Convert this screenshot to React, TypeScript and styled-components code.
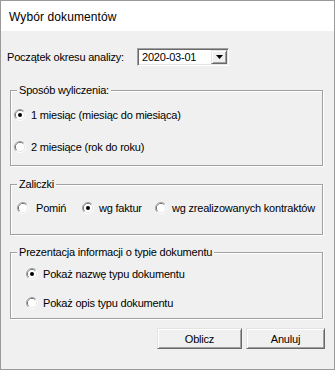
import React, { useState } from 'react'
import styled, { createGlobalStyle } from 'styled-components'

const Global = createGlobalStyle`
  html, body {
    margin: 0;
    padding: 0;
    background: #f0f0f0;
  }
  body {
    font-family: "Liberation Sans", Arial, sans-serif;
    font-size: 11px;
    color: #000;
  }
`

const Window = styled.div`
  width: 335px;
  height: 370px;
  box-sizing: border-box;
  border: 1px solid #9a9a9a;
  display: flex;
  flex-direction: column;
  background: #f0f0f0;
`

const TitleBar = styled.div`
  height: 29px;
  background: #fff;
  display: flex;
  align-items: center;
  padding-left: 8px;
  padding-top: 1px;
  font-size: 12px;
  letter-spacing: 0.1px;
  color: #000;
`

const Body = styled.div`
  flex: 1;
  display: flex;
  flex-direction: column;
  padding: 0 9px 0 9px;
  letter-spacing: -0.2px;
`

const DateRow = styled.div`
  display: flex;
  align-items: center;
  margin: 17px 0 0 -3px;
  height: 18px;
`

const Label = styled.span`
  width: 130px;
  line-height: 13px;
  padding-top: 1px;
`

const Combo = styled.div`
  width: 92px;
  height: 18px;
  box-sizing: border-box;
  border: 1px solid;
  border-color: #a0a0a0 #fff #fff #a0a0a0;
  box-shadow: inset 1px 1px 0 #696969, inset -1px -1px 0 #e3e3e3;
  background: #fff;
  display: flex;
  align-items: stretch;
  padding: 1px;
`

const ComboText = styled.span`
  flex: 1;
  padding-left: 3px;
  line-height: 14px;
`

const ComboButton = styled.div`
  width: 16px;
  box-sizing: border-box;
  background: #f0f0f0;
  border: 1px solid;
  border-color: #e3e3e3 #696969 #696969 #e3e3e3;
  box-shadow: inset 1px 1px 0 #fff, inset -1px -1px 0 #a0a0a0;
  display: flex;
  align-items: center;
  justify-content: center;
`

const Group = styled.div<{ $top: number; $height: number; $pad: string }>`
  position: relative;
  margin-top: ${p => p.$top}px;
  height: ${p => p.$height}px;
  width: 313px;
  box-sizing: border-box;
  border: 1px solid #a0a0a0;
  box-shadow: inset 1px 1px 0 #fff, 1px 1px 0 #fff;
  padding: ${p => p.$pad};
  display: flex;
  flex-direction: column;
`

const Legend = styled.span`
  position: absolute;
  top: -7px;
  left: 6px;
  padding: 0 2px;
  background: #f0f0f0;
  line-height: 13px;
`

const Stack = styled.div<{ $gap: number }>`
  display: flex;
  flex-direction: column;
  gap: ${p => p.$gap}px;
`

const Inline = styled.div`
  display: flex;
  align-items: center;
`

const Option = styled.label<{ $width?: number }>`
  display: flex;
  align-items: center;
  height: 16px;
  width: ${p => (p.$width ? `${p.$width}px` : 'auto')};
  cursor: default;
`

const OptionText = styled.span<{ $gap?: number }>`
  margin-left: ${p => p.$gap ?? 5}px;
  line-height: 13px;
  white-space: nowrap;
`

const ButtonRow = styled.div`
  display: flex;
  justify-content: flex-end;
  gap: 4px;
  margin-top: 9px;
  padding-right: 0;
`

const Button = styled.button<{ $width: number }>`
  width: ${p => p.$width}px;
  height: 21px;
  box-sizing: border-box;
  background: #f0f0f0;
  border: 1px solid;
  border-color: #e3e3e3 #696969 #696969 #e3e3e3;
  box-shadow: inset 1px 1px 0 #fff, inset -1px -1px 0 #a0a0a0;
  font-family: "Liberation Sans", Arial, sans-serif;
  font-size: 11px;
  letter-spacing: -0.2px;
  color: #000;
  padding: 0;
`

function RadioMark({ checked }: { checked: boolean }) {
  return (
    <svg width="12" height="12" viewBox="0 0 12 12">
      <defs>
        <clipPath id="tl">
          <polygon points="0,0 12,0 0,12" />
        </clipPath>
        <clipPath id="br">
          <polygon points="12,0 12,12 0,12" />
        </clipPath>
      </defs>
      <circle cx="6" cy="6" r="5.5" fill="none" stroke="#a0a0a0" clipPath="url(#tl)" />
      <circle cx="6" cy="6" r="5.5" fill="none" stroke="#ffffff" clipPath="url(#br)" />
      <circle cx="6" cy="6" r="4.5" fill="#fff" stroke="#696969" clipPath="url(#tl)" />
      <circle cx="6" cy="6" r="4.5" fill="#fff" stroke="#e3e3e3" clipPath="url(#br)" />
      <circle cx="6" cy="6" r="4" fill="#fff" />
      {checked && <circle cx="6" cy="6" r="2" fill="#000" />}
    </svg>
  )
}

function Radio(props: { label: string; checked: boolean; onPick: () => void; width?: number; gap?: number }) {
  return (
    <Option $width={props.width} onClick={props.onPick}>
      <RadioMark checked={props.checked} />
      <OptionText $gap={props.gap}>{props.label}</OptionText>
    </Option>
  )
}

export default function App() {
  const [mode, setMode] = useState(0)
  const [advance, setAdvance] = useState(1)
  const [info, setInfo] = useState(0)

  return (
    <>
      <Global />
      <Window>
        <TitleBar>Wybór dokumentów</TitleBar>
        <Body>
          <DateRow>
            <Label>Początek okresu analizy:</Label>
            <Combo>
              <ComboText>2020-03-01</ComboText>
              <ComboButton>
                <svg width="7" height="4" viewBox="0 0 7 4">
                  <polygon points="0,0 7,0 3.5,4" fill="#000" />
                </svg>
              </ComboButton>
            </Combo>
          </DateRow>

          <Group $top={24} $height={76} $pad="16px 0 0 3px">
            <Legend>Sposób wyliczenia:</Legend>
            <Stack $gap={16}>
              <Radio label="1 miesiąc (miesiąc do miesiąca)" checked={mode === 0} onPick={() => setMode(0)} />
              <Radio label="2 miesiące (rok do roku)" checked={mode === 1} onPick={() => setMode(1)} />
            </Stack>
          </Group>

          <Group $top={18} $height={51} $pad="15px 0 0 6px">
            <Legend>Zaliczki</Legend>
            <Inline>
              <Radio label="Pomiń" width={65} gap={7} checked={advance === 0} onPick={() => setAdvance(0)} />
              <Radio label="wg faktur" width={73} checked={advance === 1} onPick={() => setAdvance(1)} />
              <Radio label="wg zrealizowanych kontraktów" checked={advance === 2} onPick={() => setAdvance(2)} />
            </Inline>
          </Group>

          <Group $top={17} $height={67} $pad="13px 0 0 15px">
            <Legend>Prezentacja informacji o typie dokumentu</Legend>
            <Stack $gap={13}>
              <Radio label="Pokaż nazwę typu dokumentu" checked={info === 0} onPick={() => setInfo(0)} />
              <Radio label="Pokaż opis typu dokumentu" checked={info === 1} onPick={() => setInfo(1)} />
            </Stack>
          </Group>

          <ButtonRow>
            <Button $width={85}>Oblicz</Button>
            <Button $width={79}>Anuluj</Button>
          </ButtonRow>
        </Body>
      </Window>
    </>
  )
}
